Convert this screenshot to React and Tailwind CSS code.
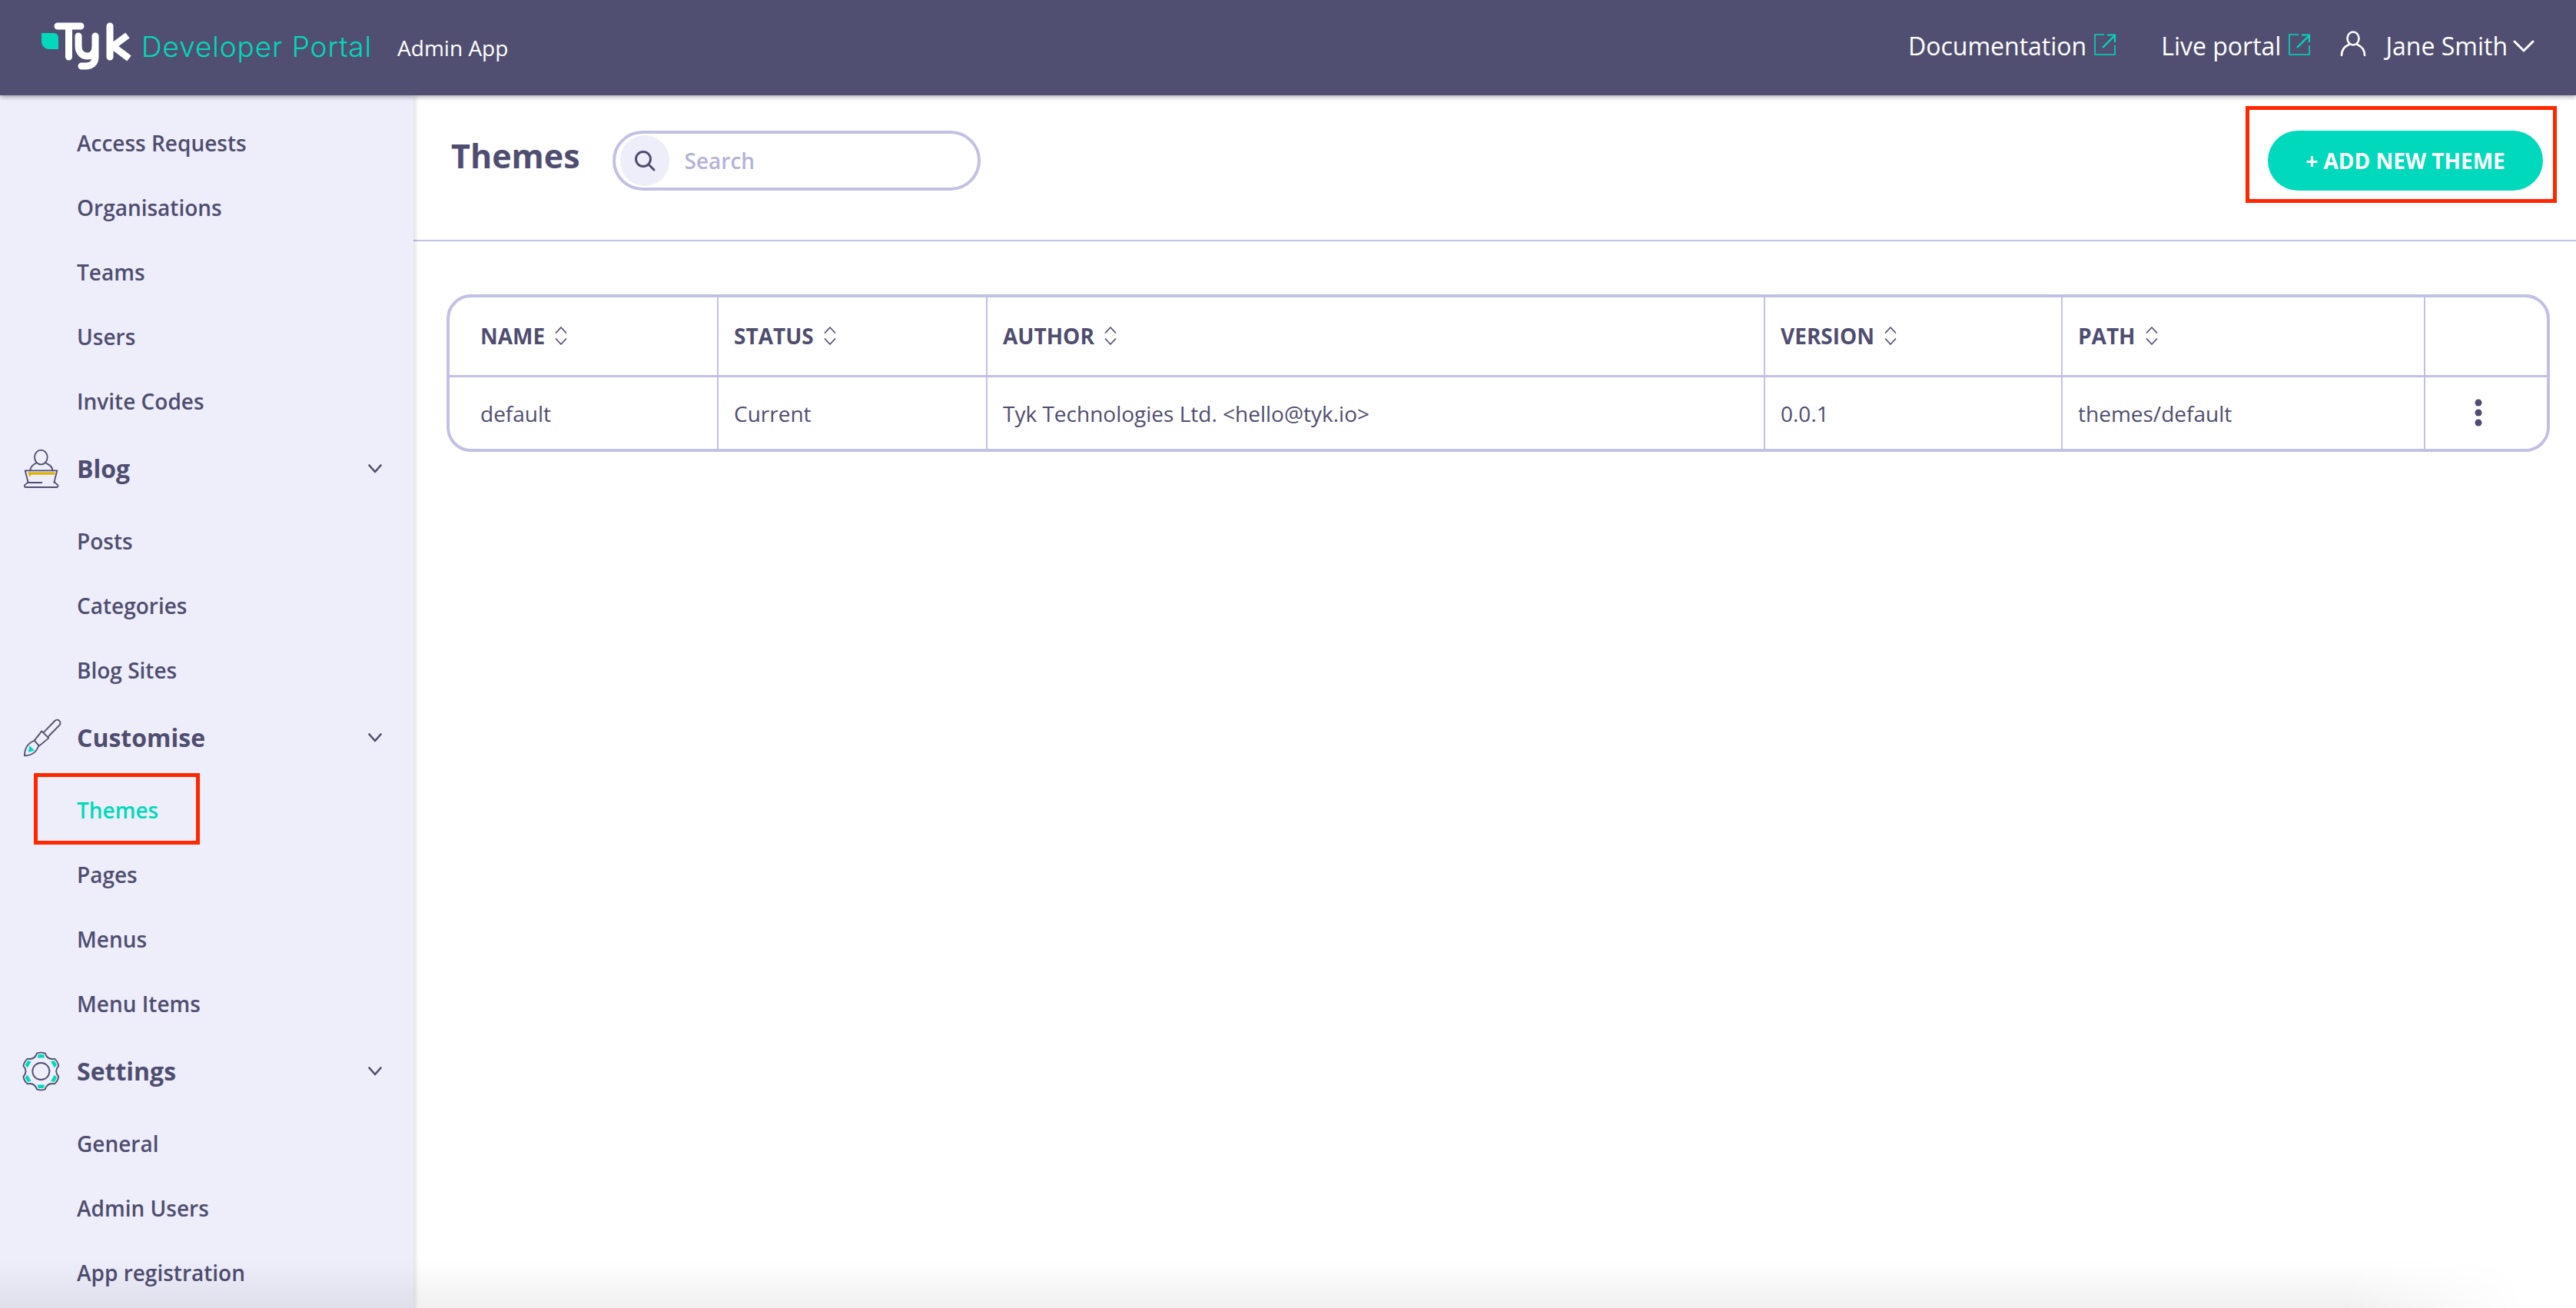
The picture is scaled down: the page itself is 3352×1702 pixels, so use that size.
import React from "react";

const navA = ["Access Requests", "Organisations", "Teams", "Users", "Invite Codes"];

function NavItem({ label, active }) {
  return (
    <a className={"flex h-[84px] items-center pl-[100px] text-[28px] font-semibold " + (active ? "text-[#00d9bb]" : "text-[#4f4d70]")}>
      {label}
    </a>
  );
}

function Chevron() {
  return (
    <svg width="18" height="12" viewBox="0 0 18 12" fill="none" stroke="#4f4d70" strokeWidth="2.6" strokeLinecap="round" strokeLinejoin="round">
      <path d="M1.5 1.5 L9 10 L16.5 1.5" />
    </svg>
  );
}

function BlogIcon() {
  return (
    <svg width="90" height="80" viewBox="0 0 270 240" fill="none" stroke="#4f4d70" strokeWidth="5.5" strokeLinecap="round" strokeLinejoin="round" className="shrink-0">
      <polygon points="78,133 185,133 185,143 92,143 85,152" fill="#dcb313" stroke="none" />
      <ellipse cx="130" cy="75" rx="25" ry="28" />
      <path d="M88 127 C88 108 105 102 112 97 M148 97 C158 103 175 108 175 127" />
      <path d="M133 174 H80 L68 127 H193 L181 174" />
      <path d="M80 172 L66 184 Q64 192 72 192 H190 Q198 192 196 184 L183 172" />
    </svg>
  );
}

function BrushIcon() {
  return (
    <svg width="90" height="80" viewBox="0 0 270 240" fill="none" stroke="#4f4d70" strokeWidth="5.5" strokeLinecap="round" strokeLinejoin="round" className="shrink-0">
      <polygon points="85,150 105,170 80,176" fill="#00d9bb" stroke="none" />
      <path d="M142 97 L184 54 A12 12 0 0 1 202 71 L160 114" />
      <path d="M133 94 L160 121 L123 152 L104 131 Z" />
      <path d="M102 132 C78 142 66 160 66 190 C92 190 112 176 120 153" />
    </svg>
  );
}

function gearPath() {
  const cx = 130, cy = 102;
  const p = (deg, r) => {
    const a = (deg * Math.PI) / 180;
    return (cx + r * Math.cos(a)).toFixed(1) + " " + (cy + r * Math.sin(a)).toFixed(1);
  };
  let d = "";
  for (let i = 0; i < 6; i++) {
    const c = -90 + i * 60;
    d += (i === 0 ? "M" : "Q") + (i === 0 ? "" : p(c - 30, 50) + " ") + p(c - 13, 72) + " Q" + p(c, 76) + " " + p(c + 13, 72) + " ";
  }
  d += "Q" + p(-120, 50) + " " + p(-103, 72) + " Z";
  return d;
}

function trap(i) {
  const cx = 130, cy = 102;
  const c = -90 + i * 60;
  const p = (deg, r) => {
    const a = (deg * Math.PI) / 180;
    return (cx + r * Math.cos(a)).toFixed(1) + "," + (cy + r * Math.sin(a)).toFixed(1);
  };
  return [p(c - 15, 54), p(c + 15, 54), p(c + 9, 67), p(c - 9, 67)].join(" ");
}

function GearIcon() {
  return (
    <svg width="90" height="68" viewBox="0 0 270 204" fill="none" stroke="#4f4d70" strokeWidth="5.5" strokeLinecap="round" strokeLinejoin="round" className="shrink-0">
      {[0, 1, 2, 3, 4, 5].map((i) => (
        <polygon key={i} points={trap(i)} fill="#00d9bb" stroke="none" />
      ))}
      <path d={gearPath()} />
      <circle cx="130" cy="102" r="33" />
    </svg>
  );
}

function NavGroup({ icon, label }) {
  return (
    <div className="mb-[6px] flex h-[92px] items-center pl-[10px] pr-[41px] text-[32px] font-bold text-[#4f4d70]">
      {icon}
      <span className="flex-1">{label}</span>
      <Chevron />
    </div>
  );
}

function ExtIcon() {
  return (
    <svg width="28" height="28" viewBox="0 0 28 28" fill="none" stroke="#00d9bb" strokeWidth="1.6" className="ml-[10px] mb-[4px] shrink-0">
      <path d="M13 1 H1 V27 H27 V15" />
      <path d="M11 18 L26 3" strokeWidth="2.4" />
      <path d="M17 1.5 H27 V11" strokeWidth="2.2" />
    </svg>
  );
}

function Logo() {
  return (
    <svg width="135" height="70" viewBox="50 25 135 70" className="mb-[4px] shrink-0" fill="none" stroke="#ffffff" strokeWidth="9" strokeLinecap="round" strokeLinejoin="round">
      <path d="M52 43 H68 C72 43 74 46 74 50 V64 H62 C56 64 52 59 52 54 Z" fill="#00d9bb" stroke="none" />
      <path d="M73 34 H103 M87.5 34 V74" />
      <path d="M100 47 V60 C100 69 106 73 112 73 C118 73 122 69 122 60 V47 M122 60 V74 C122 83 116 86 110 86 H104" />
      <path d="M141 34 V74" />
      <path d="M164 46 L145 60 L166 76" strokeLinecap="butt" strokeLinejoin="miter" />
    </svg>
  );
}

function SortIcon() {
  return (
    <svg width="16" height="24" viewBox="0 0 16 24" fill="none" stroke="#4f4d70" strokeWidth="1.7" strokeLinecap="round" strokeLinejoin="round" className="ml-[13px] shrink-0">
      <path d="M1.5 8 L8 1 L14.5 8" />
      <path d="M1.5 16 L8 23 L14.5 16" />
    </svg>
  );
}

const columns = [
  { name: "NAME", w: "w-[349px]", first: true, val: "default" },
  { name: "STATUS", w: "w-[350px]", val: "Current" },
  { name: "AUTHOR", w: "w-[1012px]", val: "Tyk Technologies Ltd. <hello@tyk.io>" },
  { name: "VERSION", w: "w-[387px]", val: "0.0.1" },
  { name: "PATH", w: "w-[472px]", val: "themes/default" },
];

export default function App() {
  return (
    <div className="relative flex h-[1702px] w-[3352px] flex-col overflow-hidden bg-white font-['Open_Sans',sans-serif] text-[#4f4d70]">
      <header className="relative z-20 flex h-[124px] shrink-0 items-center bg-[#514f71] pl-[52px] pr-[54px] text-white shadow-[0_2px_6px_rgba(0,0,0,0.35)]">
        <div className="flex items-center">
          <Logo />
          <span className="ml-[-3px] mt-[-2px] font-['Inter',sans-serif] text-[37px] font-light tracking-[0.9px] text-[#00d9bb]">Developer Portal</span>
          <span className="ml-[33px] text-[28px]">Admin App</span>
        </div>
        <div className="ml-auto flex items-center pb-[4px] text-[32px]">
          <span>Documentation</span>
          <ExtIcon />
          <span className="ml-[59px]">Live portal</span>
          <ExtIcon />
          <svg width="34" height="34" viewBox="0 0 34 34" fill="none" stroke="#ffffff" strokeWidth="2.6" strokeLinecap="round" className="ml-[39px] mb-[6px] shrink-0">
            <ellipse cx="17" cy="10" rx="7.5" ry="8.5" />
            <path d="M2 32 C2 24 7 20 11.5 18 M22.5 18 C27 20 32 24 32 32" />
          </svg>
          <span className="ml-[25px]">Jane Smith</span>
          <svg width="28" height="16" viewBox="0 0 28 16" fill="none" stroke="#ffffff" strokeWidth="3" strokeLinecap="round" strokeLinejoin="round" className="ml-[7px] shrink-0">
            <path d="M2 2 L14 14 L26 2" />
          </svg>
        </div>
      </header>

      <div className="flex min-h-0 flex-1">
        <aside className="relative z-10 w-[538px] shrink-0 overflow-hidden bg-[#edeef9] pt-[20px] shadow-[3px_0_5px_rgba(0,0,0,0.12)]">
          {navA.map((l) => <NavItem key={l} label={l} />)}
          <NavGroup icon={<BlogIcon />} label="Blog" />
          <NavItem label="Posts" />
          <NavItem label="Categories" />
          <NavItem label="Blog Sites" />
          <NavGroup icon={<BrushIcon />} label="Customise" />
          <NavItem label="Themes" active />
          <NavItem label="Pages" />
          <NavItem label="Menus" />
          <NavItem label="Menu Items" />
          <NavGroup icon={<GearIcon />} label="Settings" />
          <NavItem label="General" />
          <NavItem label="Admin Users" />
          <NavItem label="App registration" />
        </aside>

        <main className="min-w-0 flex-1">
          <div className="flex h-[190px] items-start border-b-[2px] border-[#c2c1e5] pl-[49px] pr-[43px] pt-[46px]">
            <h1 className="mt-[-6px] text-[43px] font-bold leading-[78px]">Themes</h1>
            <div className="ml-[42px] flex h-[78px] w-[479px] items-center rounded-full border-[4px] border-[#c2c1e5]">
              <div className="ml-[6px] flex h-[66px] w-[64px] items-center justify-center rounded-full bg-[#edeef9]">
                <svg width="28" height="28" viewBox="0 0 28 28" fill="none" stroke="#4f4d70" strokeWidth="3" strokeLinecap="round">
                  <circle cx="12" cy="12" r="9.5" />
                  <path d="M19 19 L26 26" />
                </svg>
              </div>
              <span className="ml-[20px] text-[28px] font-semibold text-[#b5b3d8]">Search</span>
            </div>
            <button className="ml-auto flex h-[78px] w-[358px] items-center justify-center rounded-full bg-[#00d9bb] text-[28px] font-bold text-white">+ ADD NEW THEME</button>
          </div>

          <div className="ml-[43px] mr-[34px] mt-[69px] overflow-hidden rounded-[32px] border-[4px] border-[#c2c1e5]">
            <table className="w-full table-fixed border-collapse">
              <thead>
                <tr className="h-[102px] border-b-[3px] border-[#c2c1e5]">
                  {columns.map((c) => (
                    <th key={c.name} className={c.w + " border-r-[2px] border-[#c2c1e5] text-left " + (c.first ? "pl-[40px]" : "pl-[20px]")}>
                      <span className="flex items-center text-[28px] font-bold"><span>{c.name}</span><SortIcon /></span>
                    </th>
                  ))}
                  <th className="w-[159px]" />
                </tr>
              </thead>
              <tbody>
                <tr className="h-[95px]">
                  {columns.map((c) => (
                    <td key={c.name} className={"border-r-[2px] border-[#c2c1e5] pt-[1px] text-[28px] " + (c.first ? "pl-[40px]" : "pl-[20px]")}>{c.val}</td>
                  ))}
                  <td>
                    <svg width="10" height="36" viewBox="0 0 10 36" fill="#4f4d70" className="ml-[64px]">
                      <circle cx="5" cy="5" r="4.5" />
                      <circle cx="5" cy="18" r="4.5" />
                      <circle cx="5" cy="31" r="4.5" />
                    </svg>
                  </td>
                </tr>
              </tbody>
            </table>
          </div>
        </main>
      </div>

      <div className="pointer-events-none absolute bottom-0 left-0 z-30 h-[62px] w-full bg-gradient-to-b from-transparent to-[rgba(0,0,0,0.06)] [mask-image:linear-gradient(to_right,black_91%,transparent_98%)]" />
      <div className="pointer-events-none absolute left-[44px] top-[1006px] z-40 h-[93px] w-[216px] border-[5px] border-[#ff2600]" />
      <div className="pointer-events-none absolute left-[2922px] top-[138px] z-40 h-[126px] w-[405px] border-[5px] border-[#ff2600]" />
    </div>
  );
}
